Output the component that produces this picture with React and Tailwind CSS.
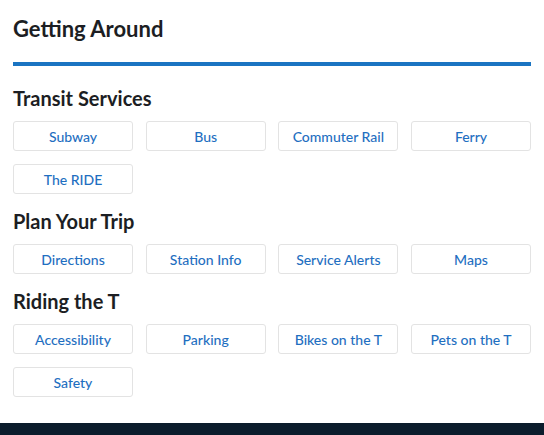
import React from "react";

const sections = [
  {
    title: "Transit Services",
    links: ["Subway", "Bus", "Commuter Rail", "Ferry", "The RIDE"],
  },
  {
    title: "Plan Your Trip",
    links: ["Directions", "Station Info", "Service Alerts", "Maps"],
  },
  {
    title: "Riding the T",
    links: ["Accessibility", "Parking", "Bikes on the T", "Pets on the T", "Safety"],
  },
];

function Section({ title, links, first }) {
  return (
    <section className={first ? "pt-[20px]" : "pt-[15px]"}>
      <h3 className="text-[20px] leading-[24px] font-bold text-[#1c1e23]">{title}</h3>
      <div className="mt-[11px] grid grid-cols-4 gap-x-[12.7px] gap-y-[13px]">
        {links.map((l) => (
          <a
            key={l}
            href="#"
            className="flex h-[30px] items-center justify-center rounded-[3px] border border-[#e3e3e3] bg-white text-[14px] font-medium text-[#1f6fc1]"
          >
            {l}
          </a>
        ))}
      </div>
    </section>
  );
}

export default function App() {
  return (
    <div className="h-[435px] overflow-hidden bg-white font-['Lato',sans-serif] flex flex-col">
      <div className="px-[13px] pb-[26px]">
        <h2 className="pt-4 pb-[20px] border-b-4 border-[#1a74c2] text-[22px] leading-[26px] font-bold text-[#1c1e23]">
          Getting Around
        </h2>
        {sections.map((s, i) => (
          <Section key={s.title} {...s} first={i === 0} />
        ))}
      </div>
      <footer className="flex-1 bg-[#0b1c2c]" />
    </div>
  );
}
